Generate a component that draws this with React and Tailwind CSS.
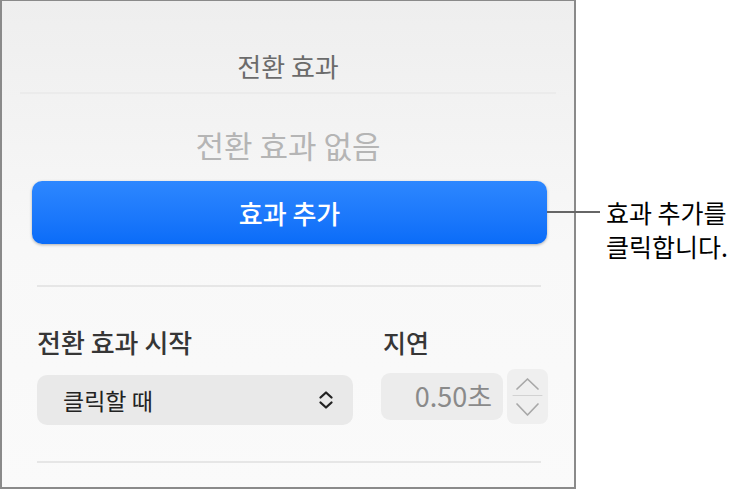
const font = { fontFamily: '"Noto Sans CJK KR", "Noto Sans", sans-serif' };

function UpDown() {
    return (
        <svg width="16" height="22" viewBox="0 0 16 22" fill="none" stroke="#222" strokeWidth="2.3" strokeLinecap="round" strokeLinejoin="round">
            <path d="M2.5 8.5 L8 3.5 L13.5 8.5" />
            <path d="M2.5 13.5 L8 18.5 L13.5 13.5" />
        </svg>
    );
}

export default function App() {
    return (
        <div className="relative w-[753px] h-[489px] bg-white flex" style={font}>
            <div className="w-[576px] h-[489px] border-2 border-t border-[#8a8a8a] bg-gradient-to-b from-[#eeeeee] via-[#f8f8f8] to-[#fafafa] flex flex-col">
                <div className="pt-[50px] text-center text-[26px] leading-[30px] text-[#6b6b6b]">전환 효과</div>
                <div className="mt-[11px] mx-[18px] h-[2px] bg-[#ebebeb]" />
                <div className="mt-[33px] text-center text-[31px] leading-[36px] text-[#b5b5b5]">전환 효과 없음</div>
                <div className="mt-[18px] ml-[30px] w-[515px] h-[63px] rounded-[10px] bg-gradient-to-b from-[#2d87ff] to-[#0a6cf8] shadow-[0_1px_3px_rgba(0,0,0,0.3)] flex items-center justify-center text-white text-[26px] font-medium">
                    효과 추가
                </div>
                <div className="mt-[41px] ml-[35px] w-[504px] h-[2px] bg-[#e6e6e6]" />
                <div className="mt-[40px] ml-[35px] flex">
                    <div className="w-[316px] flex flex-col">
                        <div className="text-[26px] leading-[30px] text-[#363636] font-medium">전환 효과 시작</div>
                        <div className="mt-[18px] h-[50px] rounded-[10px] bg-[#e9e9e9] flex items-center justify-between pl-[26px] pr-[19px]">
                            <span className="text-[23px] text-[#222]">클릭할 때</span>
                            <UpDown />
                        </div>
                    </div>
                    <div className="ml-[28px] flex flex-col">
                        <div className="ml-[2px] text-[25px] leading-[30px] text-[#363636] font-medium">지연</div>
                        <div className="mt-[12px] flex items-center gap-[4px]">
                            <div className="w-[122px] h-[47px] rounded-[9px] bg-[#ececec] flex items-center justify-end pr-[11px] text-[27px] text-[#8a8a8a]">0.50초</div>
                            <div className="w-[41px] h-[55px] rounded-[8px] bg-[#efefef]">
                                <svg width="41" height="55" viewBox="0 0 41 55" fill="none" stroke="#a8a8a8" strokeWidth="1.7" strokeLinecap="round" strokeLinejoin="round">
                                    <path d="M10 20 L20.5 10 L31 20" />
                                    <path d="M6 26.5 H35" stroke="#d2d2d2" strokeWidth="1" />
                                    <path d="M10 35 L20.5 46 L31 35" />
                                </svg>
                            </div>
                        </div>
                    </div>
                </div>
                <div className="mt-[36px] ml-[35px] w-[504px] h-[2px] bg-[#e6e6e6]" />
            </div>
            <div className="absolute left-[547px] top-[211px] w-[53px] h-[2px] bg-[#666]" />
            <div className="ml-[30px] mt-[195px] text-[25px] leading-[34px] text-black whitespace-nowrap">
                효과 추가를<br />클릭합니다.
            </div>
        </div>
    );
}
